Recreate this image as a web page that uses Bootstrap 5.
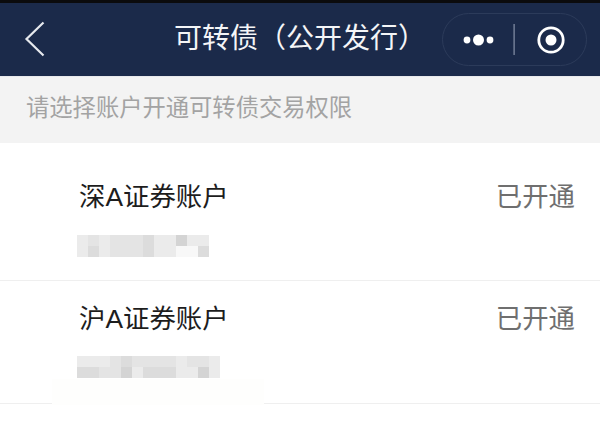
<!doctype html>
<html lang="zh">
<head>
<meta charset="utf-8">
<link href="https://cdn.jsdelivr.net/npm/bootstrap@5.3.0/dist/css/bootstrap.min.css" rel="stylesheet">
<style>
html,body{width:600px;height:444px;overflow:hidden;background:#fff;}
body{font-family:"Liberation Sans","Noto Sans CJK SC",sans-serif;border-top:3px solid #0b0b0d;}
.topbar{height:73px;background:#1b2a4a;color:#fff;padding:0 13px 0 24px;}
.backicon{width:22px;height:36px;margin-top:-1px;}
.pagetitle{left:0;right:0;text-align:center;top:18px;font-size:28px;line-height:36px;color:#f4f5f7;white-space:nowrap;}
.capsule{width:145px;height:53px;border:1px solid #2c3b5a;border-radius:27px;margin-left:auto;margin-top:-1px;}
.hintbar{height:67px;background:#f3f3f3;color:#a3a3a3;font-size:23.300px;padding-left:26px;border-top:1px solid #e8e9ec;padding-bottom:3px;}
.acct{padding:0 25px 0 79px;color:#1d1d1d;font-size:26.400px;border-bottom:1px solid #efefef;position:relative;}
.acct-a{height:138px;padding-top:37px;}
.acct-b{height:123px;padding-top:21px;}
.acct-name{line-height:34px;}
.acct-state{color:#6f6f6f;line-height:34px;}
.smear{display:grid;grid-auto-flow:column;grid-template-rows:11px 11px;grid-auto-columns:11px;margin-left:-2px;position:relative;}
.smear-a{margin-top:21px;}
.smear-b{margin-top:20px;}
.acct-b::after{content:"";position:absolute;left:52px;width:212px;top:98px;bottom:-2px;background:#fefefd;}
.cell-0{background:#f8f8f8}.cell-1{background:#ebebeb}.cell-2{background:#e4e4e4}.cell-3{background:#dcdcdc}.cell-4{background:#d4d4d4}.cell-5{background:#c9c9c9}
</style>
</head>
<body>
<header class="topbar d-flex align-items-center position-relative">
  <svg class="backicon" viewBox="0 0 22 36" fill="none" stroke="#e6e9ee" stroke-width="2.2"><path d="M19.5 1.500 2.500 18l17 16.500"/></svg>
  <div class="pagetitle position-absolute">可转债（公开发行）</div>
  <div class="capsule position-relative">
    <svg class="d-block" width="143" height="51" viewBox="0 0 143 51">
      <circle cx="24" cy="26" r="3.400" fill="#fff"/><circle cx="35.500" cy="26" r="5.500" fill="#fff"/><circle cx="47" cy="26" r="3.400" fill="#fff"/>
      <rect x="70.500" y="10" width="1.200" height="31" fill="#8792a8"/>
      <circle cx="108" cy="26" r="12.200" fill="none" stroke="#fff" stroke-width="2.800"/><circle cx="108" cy="26" r="5.500" fill="#fff"/>
    </svg>
  </div>
</header>
<div class="hintbar d-flex align-items-center">请选择账户开通可转债交易权限</div>
<section class="acct acct-a">
  <div class="d-flex justify-content-between"><span class="acct-name">深A证券账户</span><span class="acct-state">已开通</span></div>
  <div class="smear smear-a">
    <i class="cell-1"></i><i class="cell-1"></i><i class="cell-2"></i><i class="cell-3"></i><i class="cell-1"></i><i class="cell-1"></i><i class="cell-2"></i><i class="cell-2"></i><i class="cell-2"></i><i class="cell-2"></i><i class="cell-2"></i><i class="cell-2"></i><i class="cell-3"></i><i class="cell-3"></i><i class="cell-1"></i><i class="cell-1"></i><i class="cell-1"></i><i class="cell-1"></i><i class="cell-4"></i><i class="cell-0"></i><i class="cell-1"></i><i class="cell-0"></i><i class="cell-1"></i><i class="cell-3"></i>
  </div>
</section>
<section class="acct acct-b">
  <div class="d-flex justify-content-between"><span class="acct-name">沪A证券账户</span><span class="acct-state">已开通</span></div>
  <div class="smear smear-b">
    <i class="cell-1"></i><i class="cell-3"></i><i class="cell-1"></i><i class="cell-3"></i><i class="cell-1"></i><i class="cell-2"></i><i class="cell-2"></i><i class="cell-2"></i><i class="cell-3"></i><i class="cell-4"></i><i class="cell-2"></i><i class="cell-1"></i><i class="cell-2"></i><i class="cell-3"></i><i class="cell-2"></i><i class="cell-3"></i><i class="cell-2"></i><i class="cell-3"></i><i class="cell-1"></i><i class="cell-1"></i><i class="cell-2"></i><i class="cell-1"></i><i class="cell-2"></i><i class="cell-4"></i><i class="cell-1"></i><i class="cell-1"></i>
  </div>
</section>
</body>
</html>
